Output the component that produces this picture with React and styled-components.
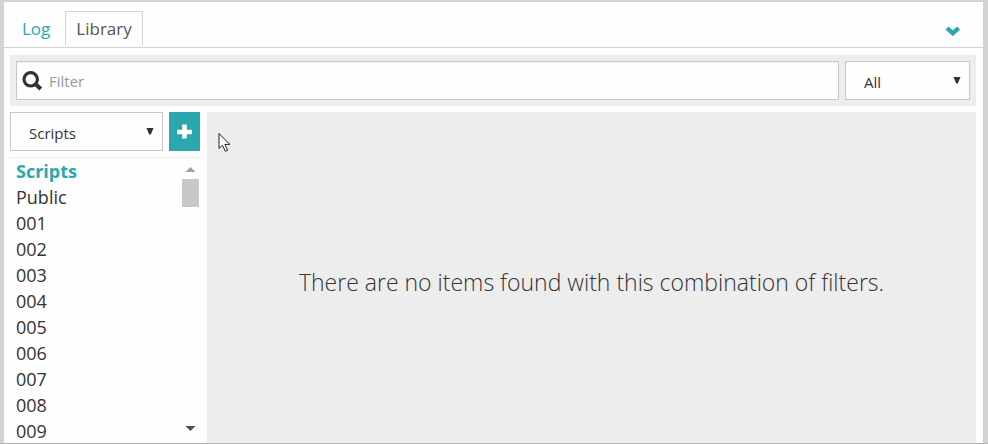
import React from "react";
import styled, { createGlobalStyle } from "styled-components";

const teal = "#2ba8ae";

const GlobalStyle = createGlobalStyle`
  *, *::before, *::after { box-sizing: border-box; }
  body {
    margin: 0;
    background: #d3d3d3;
    color: #333;
    font-family: "Open Sans", "Noto Sans", sans-serif;
  }
  button, input, select { font: inherit; color: inherit; }
`;

const Frame = styled.div`
  height: 100vh;
  padding: 2px 5px 0 4px;
  border-bottom: 1px solid #b4b4b4;
  display: flex;
`;

const Panel = styled.main`
  flex: 1;
  min-width: 0;
  background: #fefefe;
  display: flex;
  flex-direction: column;
`;

const TabBar = styled.div`
  display: flex;
  align-items: flex-end;
  gap: 4px;
  height: 46px;
  padding: 0 22px 2px 7px;
  border-bottom: 1px solid #d3d3d3;
`;

const Tab = styled.button`
  height: 34px;
  padding: 0 10px;
  border: 1px solid ${(p) => (p.$active ? "#d3d3d3" : "transparent")};
  border-bottom: 0;
  background: none;
  color: ${(p) => (p.$active ? "#555" : teal)};
  font-size: 17px;
  line-height: 34px;
`;

const CollapseButton = styled.button`
  margin: 0 0 8px auto;
  padding: 0;
  border: 0;
  background: none;
  display: flex;
`;

const Body = styled.div`
  flex: 1;
  min-height: 0;
  display: flex;
  flex-direction: column;
  gap: 6px;
  padding: 7px 7px 0 6px;
`;

const FilterBar = styled.div`
  display: flex;
  gap: 6px;
  padding: 6px;
  background: #ededed;
`;

const SearchField = styled.label`
  flex: 1;
  display: flex;
  align-items: center;
  gap: 6px;
  height: 39px;
  padding: 0 5px;
  border: 1px solid #c8c8c8;
  background: #fefefe;
  box-shadow: inset 0 1px 1px #eee;
`;

const SearchInput = styled.input`
  flex: 1;
  min-width: 0;
  padding: 0;
  border: 0;
  outline: 0;
  background: none;
  font-size: 15px;
  line-height: 20px;
  &::placeholder { color: #999; opacity: 1; }
`;

const SelectBox = styled.div`
  display: grid;
  align-items: center;
  width: ${(p) => p.$width};
  flex: ${(p) => (p.$grow ? "1" : "none")};
  min-width: 0;
  & > * { grid-area: 1 / 1; }
  & > svg { justify-self: end; margin: 0 9px 1px 0; pointer-events: none; }
`;

const Select = styled.select`
  appearance: none;
  width: 100%;
  height: 39px;
  padding: 2px 18px 0;
  border: 1px solid #c8c8c8;
  border-radius: 0;
  background: #fefefe;
  font-size: 15px;
`;

const Content = styled.div`
  flex: 1;
  min-height: 0;
  display: flex;
  gap: 7px;
`;

const Sidebar = styled.aside`
  width: 190px;
  flex: none;
  display: flex;
  flex-direction: column;
  gap: 6px;
`;

const Picker = styled.div`
  display: flex;
  gap: 6px;
`;

const AddButton = styled.button`
  width: 31px;
  height: 39px;
  padding: 0;
  border: 0;
  background: ${teal};
  display: grid;
  place-items: center;
`;

const ListArea = styled.div`
  flex: 1;
  min-height: 0;
  display: flex;
  border-top: 1px solid #ededed;
`;

const List = styled.ul`
  flex: 1;
  margin: 0;
  padding: 0 0 0 6px;
  list-style: none;
  overflow-y: auto;
  scrollbar-width: none;
`;

const Item = styled.li`
  color: ${(p) => (p.$selected ? teal : "#333")};
  font-size: 18px;
  font-weight: ${(p) => (p.$selected ? 700 : 400)};
  line-height: 26px;
`;

const ScrollTrack = styled.div`
  width: 17px;
  margin: 4px 1px 6px 0;
  display: flex;
  flex-direction: column;
`;

const ScrollArrow = styled.svg`
  display: block;
  flex: none;
  fill: ${(p) => (p.$dim ? "#a3a3a3" : "#505050")};
`;

const ScrollThumb = styled.div`
  height: 28px;
  margin-bottom: auto;
  background: #c8c8c8;
`;

const Results = styled.section`
  position: relative;
  flex: 1;
  min-width: 0;
  display: grid;
  place-items: center;
  padding: 16px 8px 8px;
  background: #ededed;
`;

const Message = styled.p`
  margin: 0;
  font-size: 23px;
  font-weight: 300;
  line-height: 32px;
  text-align: center;
`;

const Pointer = styled.svg`
  position: absolute;
  left: 11px;
  top: 20px;
`;

function SelectArrow() {
  return (
    <svg width="8" height="7" viewBox="0 0 8 7" aria-hidden="true">
      <path d="M0.5 0H7.5L4.8 6.6H3.2Z" fill="#333" />
    </svg>
  );
}

const items = ["Scripts", "Public", "001", "002", "003", "004", "005", "006", "007", "008", "009"];

export default function App() {
  return (
    <>
      <GlobalStyle />
      <Frame>
        <Panel>
          <TabBar>
            <Tab>Log</Tab>
            <Tab $active>Library</Tab>
            <CollapseButton aria-label="Collapse">
              <svg width="16" height="11" viewBox="0 0 16 11">
                <path d="M2 2L7.8 7.3L13.6 2" fill="none" stroke={teal} strokeWidth="4.4" />
              </svg>
            </CollapseButton>
          </TabBar>
          <Body>
            <FilterBar>
              <SearchField>
                <svg width="21" height="20" viewBox="0 0 21 20" aria-hidden="true">
                  <circle cx="8.7" cy="8.3" r="6.7" fill="none" stroke="#333" strokeWidth="3.2" />
                  <path d="M13.2 12.8L18.8 18" stroke="#333" strokeWidth="4" />
                </svg>
                <SearchInput type="text" placeholder="Filter" aria-label="Filter" />
              </SearchField>
              <SelectBox $width="125px">
                <Select aria-label="Type" defaultValue="All">
                  <option>All</option>
                </Select>
                <SelectArrow />
              </SelectBox>
            </FilterBar>
            <Content>
              <Sidebar>
                <Picker>
                  <SelectBox $grow>
                    <Select aria-label="Category" defaultValue="Scripts">
                      <option>Scripts</option>
                    </Select>
                    <SelectArrow />
                  </SelectBox>
                  <AddButton aria-label="Add">
                    <svg width="15" height="15" viewBox="0 0 15 15">
                      <path d="M7.5 0.5V14.5M0 8H15" stroke="#fff" strokeWidth="4.6" />
                    </svg>
                  </AddButton>
                </Picker>
                <ListArea>
                  <List>
                    {items.map((name, i) => (
                      <Item key={name} $selected={i === 0}>{name}</Item>
                    ))}
                  </List>
                  <ScrollTrack aria-hidden="true">
                    <ScrollArrow $dim width="17" height="17" viewBox="0 0 17 17">
                      <path d="M8.5 5L13.5 10H3.5Z" />
                    </ScrollArrow>
                    <ScrollThumb />
                    <ScrollArrow width="17" height="17" viewBox="0 0 17 17">
                      <path d="M3.5 6H13.5L8.5 11Z" />
                    </ScrollArrow>
                  </ScrollTrack>
                </ListArea>
              </Sidebar>
              <Results>
                <Message>There are no items found with this combination of filters.</Message>
                <Pointer width="14" height="22" viewBox="0 0 14 22" aria-hidden="true">
                  <path
                    d="M1 1.5V16.5L4.5 13.3L7.3 19.3L9.6 18.2L6.9 12.4H11.8Z"
                    fill="#fff"
                    stroke="#1c1c2c"
                    strokeWidth="1"
                  />
                </Pointer>
              </Results>
            </Content>
          </Body>
        </Panel>
      </Frame>
    </>
  );
}
